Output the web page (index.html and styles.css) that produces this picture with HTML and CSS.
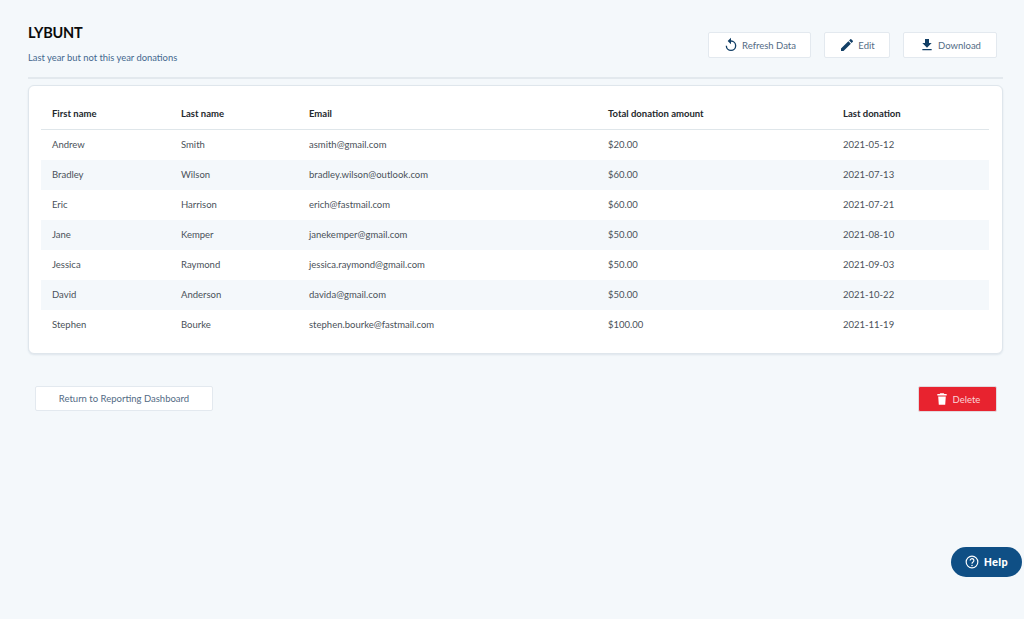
FILE: index.html
```html
<!DOCTYPE html>
<html lang="en">
<head>
<meta charset="utf-8">
<title>LYBUNT</title>
<link rel="stylesheet" href="styles.css">
</head>
<body>
<main class="page">
  <header class="head">
    <div class="titles">
      <h1>LYBUNT</h1>
      <p>Last year but not this year donations</p>
    </div>
    <div class="actions">
      <button class="btn b-refresh"><svg viewBox="0 0 24 24" class="ico"><path d="M12 5V1L7 6l5 5V7a6 6 0 1 1-6 6H4a8 8 0 1 0 8-8z"/></svg>Refresh Data</button>
      <button class="btn b-edit"><svg viewBox="0 0 24 24" class="ico"><path d="M3 17.25V21h3.75L17.81 9.94l-3.75-3.75L3 17.25zM20.71 7.04a1 1 0 0 0 0-1.41l-2.34-2.34a1 1 0 0 0-1.41 0l-1.83 1.83 3.75 3.75 1.83-1.83z"/></svg>Edit</button>
      <button class="btn b-down"><svg viewBox="0 0 24 24" class="ico"><path d="M19 9h-4V3H9v6H5l7 7 7-7zM5 18v2h14v-2H5z"/></svg>Download</button>
    </div>
  </header>
  <section class="card">
    <table>
      <colgroup><col class="c1"><col class="c2"><col class="c3"><col class="c4"><col class="c5"></colgroup>
      <thead>
        <tr><th>First name</th><th>Last name</th><th>Email</th><th>Total donation amount</th><th>Last donation</th></tr>
      </thead>
      <tbody>
        <tr><td>Andrew</td><td>Smith</td><td>asmith@gmail.com</td><td>$20.00</td><td>2021-05-12</td></tr>
        <tr><td>Bradley</td><td>Wilson</td><td>bradley.wilson@outlook.com</td><td>$60.00</td><td>2021-07-13</td></tr>
        <tr><td>Eric</td><td>Harrison</td><td>erich@fastmail.com</td><td>$60.00</td><td>2021-07-21</td></tr>
        <tr><td>Jane</td><td>Kemper</td><td>janekemper@gmail.com</td><td>$50.00</td><td>2021-08-10</td></tr>
        <tr><td>Jessica</td><td>Raymond</td><td>jessica.raymond@gmail.com</td><td>$50.00</td><td>2021-09-03</td></tr>
        <tr><td>David</td><td>Anderson</td><td>davida@gmail.com</td><td>$50.00</td><td>2021-10-22</td></tr>
        <tr><td>Stephen</td><td>Bourke</td><td>stephen.bourke@fastmail.com</td><td>$100.00</td><td>2021-11-19</td></tr>
      </tbody>
    </table>
  </section>
  <footer class="foot">
    <button class="btn b-return">Return to Reporting Dashboard</button>
    <button class="btn b-delete"><svg viewBox="0 0 24 24" class="ico ico-del"><path d="M9 2h6l1 1.500h4V6H4V3.500h4L9 2zM5.500 7.500h13L17.500 22h-11L5.500 7.500z"/></svg>Delete</button>
  </footer>
</main>
<button class="help"><svg viewBox="0 0 24 24" class="help-ico"><circle cx="12" cy="12" r="10" fill="none" stroke="#fff" stroke-width="2"/><path d="M8.800 9.500a3.200 3.200 0 1 1 5 2.600c-1 .7-1.800 1.300-1.800 2.700" fill="none" stroke="#fff" stroke-width="2"/><circle cx="12" cy="17.800" r="1.300" fill="#fff"/></svg>Help</button>
</body>
</html>
```
FILE: styles.css
```css
* { box-sizing: border-box; }
html, body { margin: 0; height: 100%; }
body {
  background: #f4f8fb;
  font-family: "Lato", "Liberation Sans", sans-serif;
  color: #3f4a54;
  overflow: hidden;
}
.page { padding: 24px 21px 0 28px; }
.head {
  display: flex;
  justify-content: space-between;
  height: 55px;
  border-bottom: 2px solid #e3e9ee;
  margin-bottom: 6px;
}
h1 {
  margin: 0;
  font-size: 14.500px;
  line-height: 18px;
  font-weight: 700;
  color: #0b0b0b;
  letter-spacing: -0.2px;
}
.titles p {
  margin: 9px 0 0;
  font-size: 9.400px;
  line-height: 14px;
  color: #44688f;
}
.actions { display: flex; gap: 13px; padding: 8px 6px 0 0; align-items: flex-start; }
.btn {
  display: flex;
  align-items: center;
  justify-content: center;
  height: 26px;
  background: #fff;
  border: 1px solid #e3e9ef;
  border-radius: 2px;
  font: inherit;
  font-size: 9.500px;
  color: #536b85;
  padding: 0;
}
.b-refresh { width: 103px; }
.b-edit { width: 66px; }
.b-down { width: 94px; }
.ico { width: 16px; height: 16px; fill: #123f66; margin-right: 3px; }
.card {
  background: #fff;
  border: 1px solid #dfe6ec;
  border-radius: 6px;
  box-shadow: 0 1px 2px rgba(60, 90, 120, .12);
  height: 269px;
  padding: 14px 13px 0 12px;
}
table { width: 948px; border-collapse: collapse; table-layout: fixed; }
.c1 { width: 129px; }
.c2 { width: 128px; }
.c3 { width: 299px; }
.c4 { width: 235px; }
.c5 { width: 157px; }
th, td { padding: 0 0 0 11px; text-align: left; font-size: 9.500px; }
th { height: 29px; padding-bottom: 1px; font-weight: 700; color: #23282d; border-bottom: 1px solid #dfe6ea; }
td { height: 30px; padding-bottom: 1px; color: #4a5159; }
tbody tr:first-child td { height: 31px; }
tbody tr:nth-child(even) { background: #f4f8fb; }
.foot {
  display: flex;
  justify-content: space-between;
  padding: 32px 6px 0 7px;
  align-items: flex-start;
}
.b-return { width: 178px; height: 25px; }
.b-delete {
  width: 79px;
  height: 26px;
  background: #e8232f;
  border-color: #e3d9de;
  color: #fbd5d8;
}
.ico-del { fill: #fff; width: 14px; height: 14px; margin-right: 4px; }
.help {
  position: absolute;
  left: 951px;
  top: 547px;
  width: 71px;
  height: 30px;
  border: 0;
  border-radius: 15px;
  background: #0f4f85;
  color: #fff;
  font: 700 11px "Roboto", "Liberation Sans", sans-serif;
  letter-spacing: .3px;
  display: flex;
  align-items: center;
  justify-content: center;
  gap: 5px;
  padding: 0;
}
.help-ico { width: 14px; height: 14px; }
```
